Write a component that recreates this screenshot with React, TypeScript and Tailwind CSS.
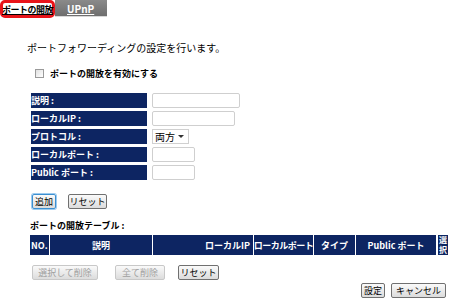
import React from 'react'

const font = { fontFamily: '"Noto Sans CJK JP", "DejaVu Sans", sans-serif' }

function Btn({ children, disabled, focus, className = '' }: { children: React.ReactNode; disabled?: boolean; focus?: boolean; className?: string }) {
  return (
    <button
      className={`h-[15px] px-[4px] text-[9px] leading-none whitespace-nowrap flex items-center justify-center rounded-[2px] border bg-gradient-to-b from-[#fafafa] to-[#dcdcdc] ${
        disabled ? 'border-[#c8c8c8] text-[#a0a0a0]' : focus ? 'border-[#3c8fd0] text-black shadow-[0_0_0_1px_#9ccbf0]' : 'border-[#707070] text-black'
      } ${className}`}
    >
      {children}
    </button>
  )
}

const rows = [
  { label: '説明 :', input: 'w-[88px]' },
  { label: 'ローカルIP :', input: 'w-[83px]' },
  { label: 'プロトコル :', input: 'select' },
  { label: 'ローカルポート :', input: 'w-[43px]' },
  { label: 'Public ポート :', input: 'w-[43px]' },
]

const cols = [
  { label: 'NO.', w: 'w-[19px]', align: 'justify-start pl-[1px]' },
  { label: '説明', w: 'w-[102px]', align: 'justify-center' },
  { label: 'ローカルIP', w: 'w-[100px]', align: 'justify-end pr-[3px]' },
  { label: 'ローカルポート', w: 'w-[59px]', align: 'justify-center tracking-[-0.5px]' },
  { label: 'タイプ', w: 'w-[41px]', align: 'justify-center' },
  { label: 'Public ポート', w: 'w-[80px]', align: 'justify-center' },
]

export default function App() {
  return (
    <div className="w-[450px] h-[302px] bg-white text-[10px] text-black overflow-hidden" style={font}>
      {/* tabs */}
      <div className="flex h-[18px]">
        <div className="w-[55px] h-[18px] border-[3px] border-[#e8141a] rounded-[5px] flex items-center justify-center text-[9px] font-bold underline leading-none whitespace-nowrap tracking-[-0.5px]">
          ポートの開放
        </div>
        <div className="w-[52px] h-[17px] bg-gradient-to-b from-[#8a8a8a] to-[#6e6e6e] border-b border-[#d8d8d8] flex items-center pl-[12px] text-white font-bold underline text-[10px]">
          UPnP
        </div>
      </div>

      <div className="pl-[27px] pt-[25px] leading-none whitespace-nowrap">ポートフォワーディングの設定を行います。</div>

      <div className="flex items-center pl-[35px] pt-[16px] gap-[6px] font-bold text-[9px] leading-none whitespace-nowrap">
        <span className="w-[9px] h-[9px] border border-[#9a9a9a] bg-gradient-to-br from-[#e0e0e0] to-[#ffffff]" />
        ポートの開放を有効にする
      </div>

      <div className="pl-[31px] pt-[15px] flex flex-col gap-[3px]">
        {rows.map((r) => (
          <div key={r.label} className="flex items-center h-[15px] gap-[5px]">
            <div className="w-[116px] h-[15px] bg-[#0d2562] text-white font-bold text-[9px] flex items-center leading-none whitespace-nowrap">
              {r.label}
            </div>
            {r.input === 'select' ? (
              <div className="w-[37px] h-[15px] border border-[#d0d0d0] flex items-center justify-between px-[2px] leading-none">
                <span>両方</span>
                <span className="w-0 h-0 border-l-[3px] border-r-[3px] border-t-[3px] border-l-transparent border-r-transparent border-t-[#333] mr-[2px]" />
              </div>
            ) : (
              <div className={`${r.input} h-[15px] border border-[#cfcfcf] rounded-[2px]`} />
            )}
          </div>
        ))}
      </div>

      <div className="flex pl-[32px] pt-[14px] gap-[12px]">
        <Btn focus className="w-[24px] px-0">追加</Btn>
        <Btn className="w-[39px]">リセット</Btn>
      </div>

      <div className="pl-[30px] pt-[12px] font-bold text-[9px] leading-none whitespace-nowrap">ポートの開放テーブル :</div>

      <div className="flex pl-[30px] pt-[5px] gap-[1px] text-[9px] whitespace-nowrap">
        {cols.map((c) => (
          <div key={c.label} className={`${c.w} h-[20px] bg-[#0d2562] text-white font-bold flex items-center ${c.align} leading-none`}>
            {c.label}
          </div>
        ))}
        <div className="w-[10px] h-[20px] bg-[#0d2562] text-white font-bold text-[8px] flex flex-col items-center justify-center ml-[1px] overflow-hidden">
          <span className="block h-[10px] leading-[10px]">選</span>
          <span className="block h-[10px] leading-[10px]">択</span>
        </div>
      </div>

      <div className="flex pl-[32px] pt-[10px]">
        <Btn disabled className="w-[66px]">選択して削除</Btn>
        <Btn disabled className="w-[50px] ml-[17px]">全て削除</Btn>
        <Btn className="w-[41px] ml-[13px]">リセット</Btn>
      </div>

      <div className="flex justify-end pr-[4px] pt-[3px] gap-[6px]">
        <Btn className="w-[24px] px-0">設定</Btn>
        <Btn className="w-[55px]">キャンセル</Btn>
      </div>
    </div>
  )
}
